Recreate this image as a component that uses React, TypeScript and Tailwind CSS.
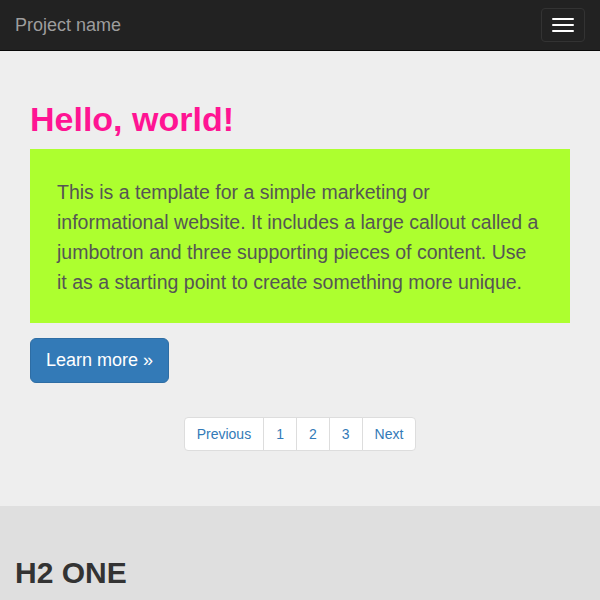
import { useState } from 'react';

const pages = ['Previous', '1', '2', '3', 'Next'];

const Navbar = () => (
  <nav className="flex h-[51px] items-center justify-between border-b border-[#080808] bg-[#222222] px-[15px]">
    <a href="#" className="text-[18px] leading-[20px] text-[#9d9d9d]">
      Project name
    </a>
    <button
      type="button"
      aria-label="Toggle navigation"
      className="flex h-[34px] w-[44px] flex-col gap-[4px] rounded-[4px] border border-[#333333] px-[10px] pt-[9px]"
    >
      <span className="block h-[2px] w-[22px] rounded-[1px] bg-white" />
      <span className="block h-[2px] w-[22px] rounded-[1px] bg-white" />
      <span className="block h-[2px] w-[22px] rounded-[1px] bg-white" />
    </button>
  </nav>
);

const Pagination = () => {
  const [active] = useState<string | null>(null);
  return (
    <ul className="mt-[34px] flex justify-center">
      {pages.map((p, i) => (
        <li key={p} className={i > 0 ? '-ml-px' : ''}>
          <a
            href="#"
            className={`block border border-[#dddddd] bg-white px-[12px] py-[6px] text-[14px] leading-[20px] text-[#337ab7] ${
              i === 0 ? 'rounded-l-[4px]' : ''
            } ${i === pages.length - 1 ? 'rounded-r-[4px]' : ''} ${active === p ? 'bg-[#eeeeee]' : ''}`}
          >
            {p}
          </a>
        </li>
      ))}
    </ul>
  );
};

export default function App() {
  return (
    <div className="min-h-screen bg-[#dfdfdf] font-['Liberation_Sans',Arial,sans-serif] text-[#333333]">
      <Navbar />

      {/* jumbotron */}
      <section className="bg-[#eeeeee] px-[30px] pt-[48px] pb-[55px]">
        <h1 className="mb-[10px] text-[34px] font-bold leading-[40px] text-[#ff1493]">
          Hello, world!
        </h1>
        <div className="bg-[#adff2f] pt-[28px] pb-[26px] pl-[27px]">
          <p className="whitespace-nowrap text-[19.5px] leading-[30px] text-[#555555]">
            This is a template for a simple marketing or
            <br />
            informational website. It includes a large callout called a
            <br />
            jumbotron and three supporting pieces of content. Use
            <br />
            it as a starting point to create something more unique.
          </p>
        </div>
        <a
          href="#"
          className="mt-[15px] inline-block h-[45px] rounded-[6px] border border-[#2e6da4] bg-[#337ab7] px-[15px] text-[18px] leading-[43px] text-white"
        >
          Learn more &raquo;
        </a>
        <Pagination />
      </section>

      {/* content */}
      <section className="bg-[#dfdfdf] px-[15px] pt-[50px] pb-[20px]">
        <h2 className="text-[30px] font-bold leading-[33px] text-[#333333]">H2 ONE</h2>
      </section>
    </div>
  );
}
